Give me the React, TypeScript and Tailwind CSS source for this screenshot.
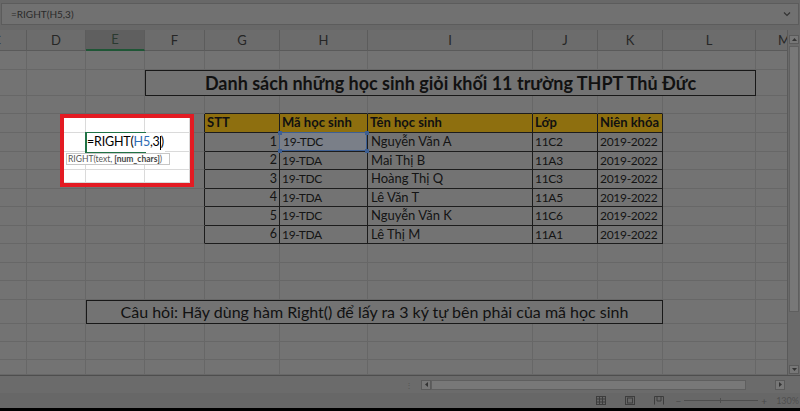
import React from 'react';

const FONT = "font-[Lato,'Liberation_Sans',sans-serif]";
const COLS = 'grid grid-cols-[27px_59px_59px_60px_75px_88px_165px_65px_65px_93px_31px]';
const ROWS = 'grid-rows-[19px_26px_18px_19px_19px_18px_19px_18px_19px_18px_19px_18px_19px_24px_18px_18px_15px]';

const headers = ['STT', 'Mã học sinh', 'Tên học sinh', 'Lớp', 'Niên khóa'];
const students = [
  ['1', '19-TDC', 'Nguyễn Văn A', '11C2', '2019-2022'],
  ['2', '19-TDA', 'Mai Thị B', '11A3', '2019-2022'],
  ['3', '19-TDC', 'Hoàng Thị Q', '11C3', '2019-2022'],
  ['4', '19-TDA', 'Lê Văn T', '11A5', '2019-2022'],
  ['5', '19-TDC', 'Nguyễn Văn K', '11C6', '2019-2022'],
  ['6', '19-TDA', 'Lê Thị M', '11A1', '2019-2022'],
];

function FormulaBar() {
  return (
    <div className="h-[30px] bg-[#686868] pt-[3px]">
      <div className="h-[22px] mx-[1px] bg-[#717171] border border-[#5c5c5c] flex items-center justify-between px-[9px]">
        <span className="text-[10px] text-[#2a2a2a]">=RIGHT(H5,3)</span>
        <svg width="8" height="6" viewBox="0 0 8 6" className="mr-[-2px]">
          <path d="M1 1.5 L4 4.5 L7 1.5" stroke="#333" strokeWidth="1.2" fill="none" />
        </svg>
      </div>
    </div>
  );
}

function ColumnHeaders() {
  const letters = ['C', 'D', 'E', 'F', 'G', 'H', 'I', 'J', 'K', 'L', 'M'];
  return (
    <div className={`${COLS} h-[21px] bg-[#6c6c6c] border-b border-[#5a5a5a]`}>
      {letters.map((l, i) => {
        if (i === 0)
          return (
            <div key={l} className="flex justify-end overflow-hidden border-r border-[#5c5c5c]">
              <span className="w-[59px] shrink-0 text-center text-[13px] leading-[20px] text-[#262626]">{l}</span>
            </div>
          );
        if (i === 10)
          return (
            <div key={l} className="flex overflow-hidden">
              <span className="w-[56px] shrink-0 text-center text-[13px] leading-[20px] text-[#262626]">{l}</span>
            </div>
          );
        if (l === 'E')
          return (
            <div key={l} className="bg-[#5f5f5f] border-r border-[#5c5c5c] border-b-2 border-b-[#1f5636] text-center text-[13px] leading-[19px] text-[#2b3a31]">
              {l}
            </div>
          );
        return (
          <div key={l} className="border-r border-[#5c5c5c] text-center text-[13px] leading-[20px] text-[#262626]">
            {l}
          </div>
        );
      })}
    </div>
  );
}

function Corners() {
  return (
    <>
      <span className="absolute -left-[2px] -top-[2px] w-[4px] h-[4px] bg-[#3e5f92]" />
      <span className="absolute -right-[2px] -top-[2px] w-[4px] h-[4px] bg-[#3e5f92]" />
      <span className="absolute -left-[2px] -bottom-[2px] w-[4px] h-[4px] bg-[#3e5f92]" />
      <span className="absolute -right-[2px] -bottom-[2px] w-[4px] h-[4px] bg-[#3e5f92]" />
    </>
  );
}

function Grid() {
  const cells: React.ReactNode[] = [];
  for (let r = 0; r < 17; r++) {
    for (let c = 0; c < 11; c++) {
      const k = `${r}-${c}`;
      if (r === 1 && c >= 3 && c <= 9) {
        if (c === 3)
          cells.push(
            <div key={k} className="col-span-7 border-[1.5px] border-[#181818] flex items-center justify-center font-bold text-[18px] text-[#111] whitespace-nowrap">
              Danh sách những học sinh giỏi khối 11 trường THPT Thủ Đức
            </div>
          );
        continue;
      }
      if (r === 13 && c >= 2 && c <= 8) {
        if (c === 2)
          cells.push(
            <div key={k} className="col-span-7 border-[1.5px] border-[#181818] flex items-center justify-center text-[16px] text-[#111] whitespace-nowrap">
              Câu hỏi: Hãy dùng hàm Right() để lấy ra 3 ký tự bên phải của mã học sinh
            </div>
          );
        continue;
      }
      if (r >= 3 && r <= 9 && c >= 4 && c <= 8) {
        const col = c - 4;
        if (r === 3) {
          cells.push(
            <div key={k} className="border-r border-b border-[#1c1c1c] bg-[#8e6f0f] flex items-center pl-[2px] font-bold text-[13px] text-[#111] whitespace-nowrap">
              {headers[col]}
            </div>
          );
        } else {
          const val = students[r - 4][col];
          if (col === 0)
            cells.push(
              <div key={k} className="border-r border-b border-[#1c1c1c] flex items-center justify-end pr-[2px] text-[12.5px] text-[#141414]">
                {val}
              </div>
            );
          else if (r === 4 && col === 1)
            cells.push(
              <div key={k} className="relative border-r border-b border-[#1c1c1c] bg-[#7a7f88] flex items-center pl-[3px] text-[12px] tracking-[-0.3px] text-[#141414] whitespace-nowrap">
                {val}
                <span className="absolute -left-[1px] -top-[1px] right-0 bottom-0 border border-[#3e5f92]" />
                <Corners />
              </div>
            );
          else if (col === 2)
            cells.push(
              <div key={k} className="border-r border-b border-[#1c1c1c] flex items-center pl-[3px] text-[13px] text-[#141414] whitespace-nowrap">
                {val}
              </div>
            );
          else
            cells.push(
              <div key={k} className="border-r border-b border-[#1c1c1c] flex items-center pl-[2px] text-[12px] tracking-[-0.3px] text-[#141414] whitespace-nowrap">
                {val}
              </div>
            );
        }
        continue;
      }
      if (r >= 3 && r <= 9 && c === 3) {
        cells.push(<div key={k} className="border-r border-b border-r-[#1c1c1c] border-b-[#676767]" />);
      } else if (r === 2 && c >= 4 && c <= 8) {
        cells.push(<div key={k} className="border-r border-b border-r-[#676767] border-b-[#1c1c1c]" />);
      } else if (c === 10) {
        cells.push(<div key={k} className="border-b border-[#676767]" />);
      } else {
        cells.push(<div key={k} className="border-r border-b border-[#676767]" />);
      }
    }
  }
  return <div className={`${COLS} ${ROWS} h-[324px] bg-[#737373]`}>{cells}</div>;
}

function VScroll() {
  return (
    <div className="w-[13px] bg-[#6a6a6a] border-l border-[#5a5a5a] flex flex-col items-center pt-[5px] pb-[1px]">
      <div className="w-[10px] h-[9px] bg-[#777] border border-[#5a5a5a] flex items-center justify-center">
        <svg width="5" height="3" viewBox="0 0 5 3"><path d="M0 3 L2.5 0 L5 3 Z" fill="#333" /></svg>
      </div>
      <div className="mt-[2px] w-[10px] h-[266px] bg-[#787878] border border-[#5f5f5f]" />
      <div className="flex-1" />
      <div className="w-[10px] h-[9px] bg-[#777] border border-[#5a5a5a] flex items-center justify-center">
        <svg width="5" height="3" viewBox="0 0 5 3"><path d="M0 0 L2.5 3 L5 0 Z" fill="#333" /></svg>
      </div>
    </div>
  );
}

function HScroll() {
  return (
    <div className="h-[18px] bg-[#6b6b6b] border-t border-[#4e4e4e] flex items-center">
      <div className="w-[405px]" />
      <span className="text-[8px] leading-none text-[#555] w-[16px]">⋮</span>
      <div className="w-[10px] h-[10px] bg-[#777] border border-[#5a5a5a] flex items-center justify-center">
        <svg width="3" height="5" viewBox="0 0 3 5"><path d="M3 0 L0 2.5 L3 5 Z" fill="#333" /></svg>
      </div>
      <div className="w-[315px] h-[10px] bg-[#787878] border border-[#5f5f5f]" />
      <div className="w-[29px]" />
      <div className="w-[10px] h-[10px] bg-[#777] border border-[#5a5a5a] flex items-center justify-center">
        <svg width="3" height="5" viewBox="0 0 3 5"><path d="M0 0 L3 2.5 L0 5 Z" fill="#333" /></svg>
      </div>
    </div>
  );
}

function StatusBar() {
  return (
    <div className="h-[15px] bg-[#676767] flex items-center justify-end pr-[1px]">
      <svg width="10" height="9" viewBox="0 0 10 9" className="mr-[19px]">
        <rect x="0.5" y="0.5" width="9" height="8" fill="none" stroke="#3d3d3d" />
        <path d="M3.5 0.5 V8.5 M6.5 0.5 V8.5 M0.5 3 H9.5 M0.5 6 H9.5" stroke="#3d3d3d" />
      </svg>
      <svg width="10" height="9" viewBox="0 0 10 9" className="mr-[19px]">
        <rect x="0.5" y="0.5" width="9" height="8" fill="none" stroke="#3d3d3d" />
        <rect x="2.5" y="2" width="5" height="5" fill="none" stroke="#3d3d3d" />
      </svg>
      <svg width="10" height="9" viewBox="0 0 10 9" className="mr-[12px]">
        <path d="M0.5 8.5 V0.5 H9.5 V8.5" fill="none" stroke="#3d3d3d" />
        <path d="M3 0.5 V5 H7 V0.5" fill="none" stroke="#3d3d3d" />
      </svg>
      <span className="text-[10px] leading-none text-[#4a4a4a]">−</span>
      <div className="relative mx-[3px] w-[74px] h-[1px] bg-[#4e4e4e]">
        <span className="absolute left-[36px] -top-[2px] w-[1px] h-[5px] bg-[#4e4e4e]" />
      </div>
      <span className="text-[10px] leading-none text-[#4a4a4a] mr-[9px]">+</span>
      <span className="text-[9px] leading-none text-[#4f4f4f]">130%</span>
    </div>
  );
}

function Callout() {
  return (
    <div className="absolute left-[60px] top-[114px] w-[134px] h-[73px] border-4 border-[#e31b23] bg-white">
      <div className="grid grid-cols-[22px_59px_45px] grid-rows-[15px_19px_18px_13px] h-full">
        {Array.from({ length: 12 }).map((_, i) => (
          <div key={i} className="border-r border-b border-[#dadada]" />
        ))}
      </div>
      <div className="absolute left-[21px] top-[14px] w-[61px] h-[21px] border-2 border-[#217346]" />
      <div className="absolute left-[23px] top-[15px] h-[19px] flex items-center text-[12.5px] tracking-[-0.2px] text-black whitespace-nowrap bg-white pr-[1px]">
        <span>=RIGHT(</span>
        <span className="text-[#2f6db5]">H5</span>
        <span>,3</span>
        <span className="w-[1px] h-[14px] bg-black" />
        <span>)</span>
      </div>
      <div className="absolute left-[2px] top-[35px] w-[104px] h-[12px] border border-[#c6c6c6] bg-white flex items-center pl-[1px] text-[8.5px] leading-none text-[#555] whitespace-nowrap">
        RIGHT(text, <span className="font-bold ml-[2px] text-[#444]">[num_chars]</span>)
      </div>
    </div>
  );
}

export default function App() {
  return (
    <div className={`relative w-[800px] h-[411px] overflow-hidden bg-[#6a6a6a] ${FONT}`}>
      <FormulaBar />
      <div className="flex h-[345px]">
        <div className="w-[787px]">
          <ColumnHeaders />
          <Grid />
        </div>
        <VScroll />
      </div>
      <HScroll />
      <StatusBar />
      <div className="h-[3px] bg-black" />
      <Callout />
    </div>
  );
}
